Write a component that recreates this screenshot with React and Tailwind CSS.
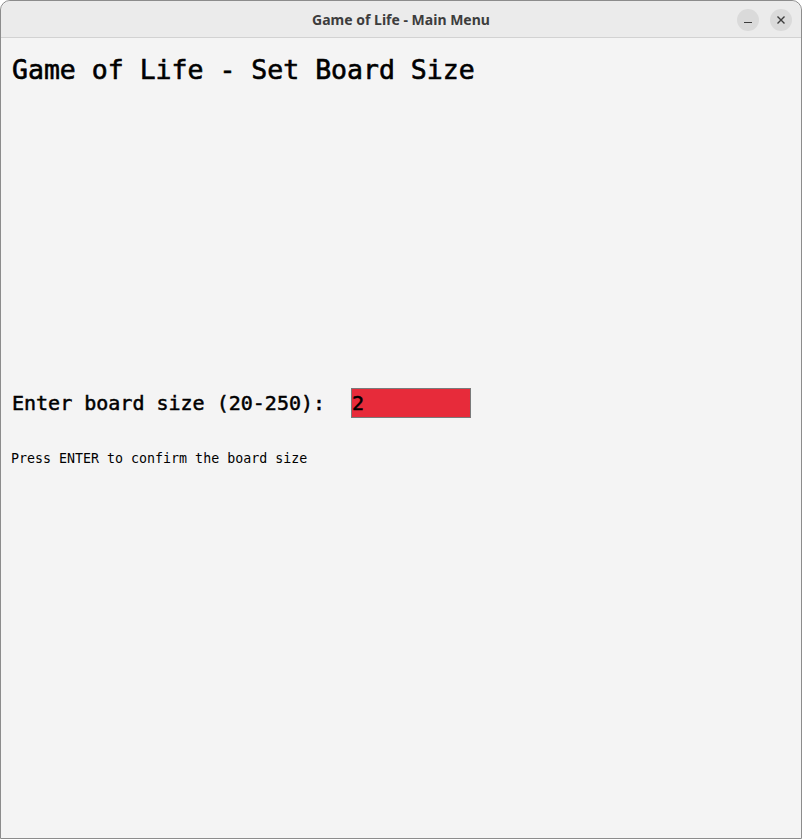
import React, {useState} from 'react'

const TitleBar = () => {
    return (
        <div className="relative h-[37px] flex items-center justify-center bg-[#ebebeb] border-b border-[#d2d2d2] rounded-t-[10px]">
            <span className="text-[14px] font-bold text-[#3d3d3d]" style={{fontFamily: '"Noto Sans", sans-serif'}}>
                Game of Life - Main Menu
            </span>
            {/* window controls */}
            <div className="absolute right-[9px] top-[8px] flex gap-[11px]">
                <div className="w-[22px] h-[22px] rounded-full bg-[#dadada] flex items-center justify-center">
                    <div className="w-[8px] h-[1px] bg-[#3d3d3d] mt-[4px]"></div>
                </div>
                <div className="w-[22px] h-[22px] rounded-full bg-[#dadada] flex items-center justify-center">
                    <svg width="10" height="10" viewBox="0 0 10 10">
                        <path d="M1.5 1.5 L8.5 8.5 M8.5 1.5 L1.5 8.5" stroke="#3d3d3d" strokeWidth="1.4" />
                    </svg>
                </div>
            </div>
        </div>
    )
}

const App = () => {
    const [size, setSize] = useState('2');
    const mono = {fontFamily: '"DejaVu Sans Mono", "Liberation Mono", monospace'};

    return (
        <div className="w-[802px] h-[839px] bg-[#f4f4f4] border border-[#8c8c8c] rounded-t-[10px] flex flex-col overflow-hidden">
            <TitleBar />

            <div className="flex flex-col pl-[11px] text-black" style={mono}>
                <h1 className="mt-[14px] text-[26.5px] leading-[36px] font-normal [-webkit-text-stroke:0.6px_black]">
                    Game of Life - Set Board Size
                </h1>

                <div className="mt-[300px] flex items-center">
                    <span className="text-[20px] leading-[30px] font-normal [-webkit-text-stroke:0.5px_black]">Enter board size (20-250):</span>
                    <input
                        value={size}
                        onChange={(e) => setSize(e.target.value)}
                        className="ml-[26px] w-[120px] h-[30px] bg-[#e72b3a] border border-[#7a7a7a] px-0 text-[20px] font-normal text-black outline-none [-webkit-text-stroke:0.5px_black]"
                        style={mono}
                    />
                </div>

                <p className="mt-[32px] -ml-[1px] text-[13.3px] leading-[18px]">
                    Press ENTER to confirm the board size
                </p>
            </div>
        </div>
    )
}
export default App
